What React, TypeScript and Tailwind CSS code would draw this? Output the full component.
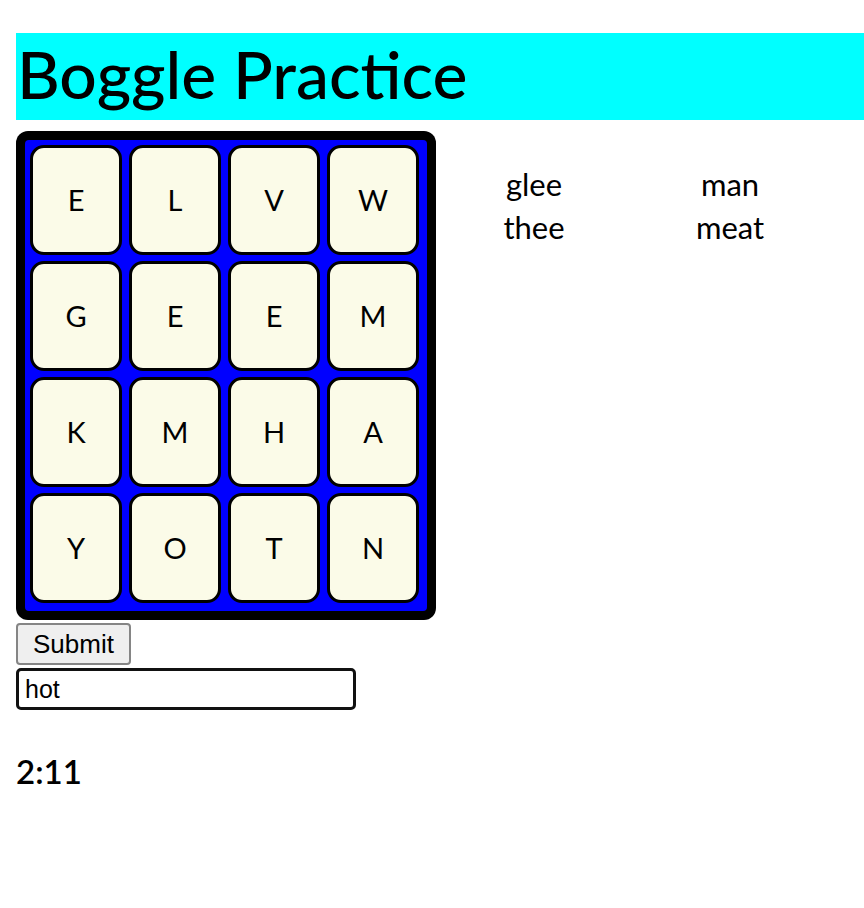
import { useState } from "react";

const board = [
  ["E", "L", "V", "W"],
  ["G", "E", "E", "M"],
  ["K", "M", "H", "A"],
  ["Y", "O", "T", "N"],
];

const words = ["glee", "man", "thee", "meat"];

const Tile = ({ letter }: { letter: string }) => {
  return (
    <div className="w-[92px] h-[110px] flex items-center justify-center bg-[#fbfbe8] border-[3px] border-black rounded-[14px] text-[29px] text-black">
      {letter}
    </div>
  );
};

const App = () => {
  const [guess, setGuess] = useState<string>("hot");

  return (
    <div
      className="pl-4 pt-[33px] min-h-screen bg-white text-black"
      style={{ fontFamily: "Lato, 'Noto Sans', sans-serif" }}
    >
      <h1 className="bg-[#00ffff] h-[87px] flex items-center text-[66px] font-medium leading-none pl-[1px] pb-[6px]">
        Boggle Practice
      </h1>

      <div className="flex mt-[11px]">
        <div className="w-[420px] h-[489px] bg-black rounded-[12px] p-[9px]">
          <div className="w-full h-full bg-[#0000ff] rounded-[4px] pl-[5px] pt-[5px] grid grid-cols-[repeat(4,92px)] grid-rows-[repeat(4,110px)] gap-x-[7px] gap-y-[6px]">
            {board.map((row, i) =>
              row.map((letter, j) => <Tile key={`${i}-${j}`} letter={letter} />)
            )}
          </div>
        </div>

        <div className="grid grid-cols-[196px_196px] content-start pt-[32px]">
          {words.map((w) => (
            <div key={w} className="text-center text-[31px] leading-[43px]">
              {w}
            </div>
          ))}
        </div>
      </div>

      <div style={{ fontFamily: "Arial, 'Liberation Sans', sans-serif" }}>
        <button
          type="button"
          className="mt-[3px] block h-[42px] px-[15px] bg-[#efefef] border-2 border-[#858585] rounded-[4px] text-[26px] leading-none"
        >
          Submit
        </button>
        <input
          type="text"
          value={guess}
          onChange={(e) => setGuess(e.target.value)}
          className="mt-[3px] block w-[340px] h-[42px] px-[6px] border-[3px] border-[#111] rounded-[5px] text-[25px] outline-none"
        />
      </div>

      <h3 className="mt-[45px] text-[33px] font-semibold leading-none">2:11</h3>
    </div>
  );
};

export default App;
